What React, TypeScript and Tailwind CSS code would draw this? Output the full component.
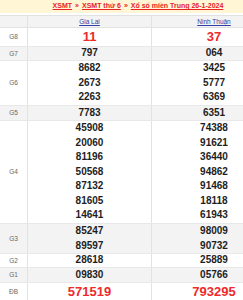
import React from "react";

type Row = { label: string; a: string[]; b: string[]; big?: boolean; gray?: boolean; h: string };

const rows: Row[] = [
  { label: "G8", a: ["11"], b: ["37"], big: true, h: "h-[19px]" },
  { label: "G7", a: ["797"], b: ["064"], gray: true, h: "h-[14px]" },
  { label: "G6", a: ["8682", "2673", "2263"], b: ["3425", "5777", "6369"], h: "h-[45px]" },
  { label: "G5", a: ["7783"], b: ["6351"], gray: true, h: "h-[15px]" },
  { label: "G4", a: ["45908", "20060", "81196", "50568", "87132", "81605", "14641"], b: ["74388", "91621", "36440", "94862", "91468", "18118", "61943"], h: "h-[103px]" },
  { label: "G3", a: ["85247", "89597"], b: ["98009", "90732"], gray: true, h: "h-[30px]" },
  { label: "G2", a: ["28618"], b: ["25889"], h: "h-[14px]" },
  { label: "G1", a: ["09830"], b: ["05766"], gray: true, h: "h-[15px]" },
  { label: "ĐB", a: ["571519"], b: ["793295"], big: true, h: "h-[19px]" },
];

export default function App() {
  return (
    <div className="w-[243px] h-[300px] overflow-hidden bg-white" style={{ fontFamily: '"Liberation Sans", Arial, sans-serif' }}>
      <div className="w-[276px]">
        <div className="h-[13px] bg-[#fff6d5] flex items-center justify-center text-[7px] font-bold text-[#e8232a]">
          <span className="underline">XSMT</span>
          <span className="mx-[3px]">»</span>
          <span className="underline">XSMT thứ 6</span>
          <span className="mx-[3px]">»</span>
          <span className="underline">Xổ số miền Trung 26-1-2024</span>
        </div>
        <div className="h-[2px]" />
        <div className="border-t border-[#e2e2e2]">
          <div className="flex h-[12px] bg-[#f3f3f3] border-b border-[#e2e2e2]">
            <div className="w-[28px] border-r border-[#e2e2e2]" />
            <div className="w-[124px] border-r border-[#e2e2e2] flex items-center justify-center text-[6.5px] text-[#2e3ea5] underline">Gia Lai</div>
            <div className="w-[124px] flex items-center justify-center text-[6.5px] text-[#2e3ea5] underline">Ninh Thuận</div>
          </div>
          {rows.map((r) => (
            <div key={r.label} className={`flex box-border ${r.h} border-b border-[#e8e8e8] ${r.gray ? "bg-[#f3f3f3]" : "bg-white"}`}>
              <div className="w-[28px] border-r border-[#e2e2e2] flex items-center justify-center text-[6.5px] text-[#666]">{r.label}</div>
              {[r.a, r.b].map((col, i) => (
                <div key={i} className={`w-[124px] ${i === 0 ? "border-r border-[#e2e2e2]" : ""} flex flex-col items-center justify-center`}>
                  {col.map((n) => (
                    <div key={n} className={r.big ? "text-[13px] leading-[16px] font-bold text-[#ee2a2a]" : "text-[10px] leading-[14.6px] font-bold text-[#1e1e1e]"}>{n}</div>
                  ))}
                </div>
              ))}
            </div>
          ))}
        </div>
      </div>
    </div>
  );
}
